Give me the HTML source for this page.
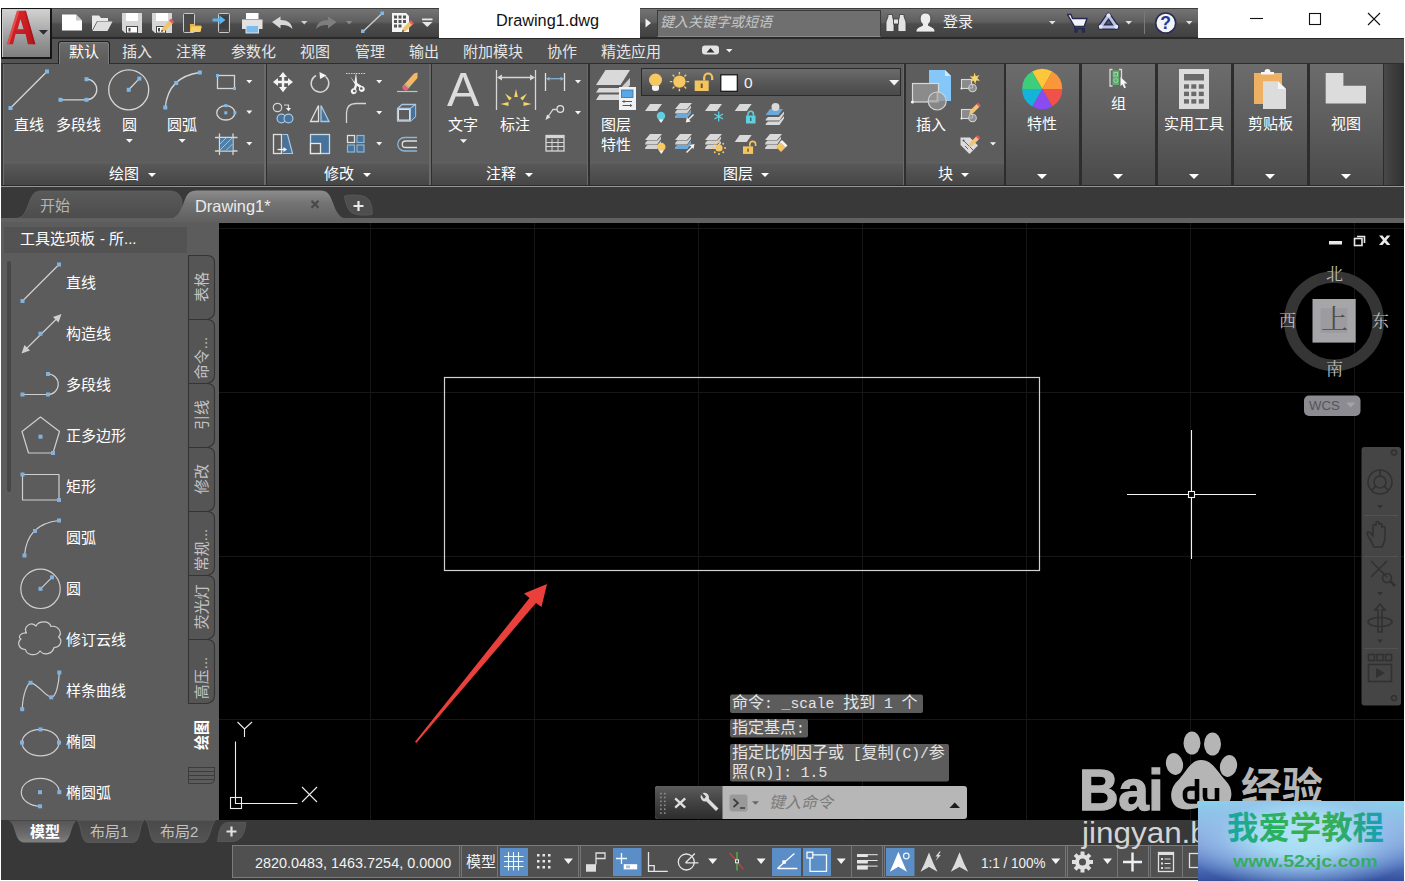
<!DOCTYPE html>
<html lang="zh-CN">
<head>
<meta charset="utf-8">
<title>Drawing1.dwg</title>
<style>
*{box-sizing:border-box;margin:0;padding:0}
html,body{width:1405px;height:881px;overflow:hidden;background:#fff}
body{position:relative;font-family:"Liberation Sans","Noto Sans CJK SC",sans-serif;font-size:15px;color:#fff;line-height:1}
.a{position:absolute}
.w{display:inline-block;position:relative;white-space:nowrap;line-height:1;font-family:"Liberation Sans","Noto Sans CJK SC",sans-serif}
svg{display:inline-block;overflow:visible}
.t{position:absolute;white-space:nowrap;line-height:0}
.tri{position:absolute;width:0;height:0;border-left:4px solid transparent;border-right:4px solid transparent;border-top:4px solid #fff}
.ic{position:absolute;overflow:visible}
</style>
</head>
<body>
<!-- ===== TITLE BAR ===== -->
<div class="a" id="titlebar" style="left:0;top:0;width:1405px;height:38px;background:#fff"></div>
<div class="a" id="qat" style="left:1px;top:8px;width:438px;height:30px;background:linear-gradient(#747474,#5e5e5e 46%,#4c4c4c 54%,#414141);border-top:1px solid #3e3e3e;border-bottom:1px solid #292929"></div>
<div class="a" id="infobar" style="left:640px;top:8px;width:558px;height:30px;background:linear-gradient(#747474,#5e5e5e 46%,#4c4c4c 54%,#414141);border-top:1px solid #3e3e3e;border-bottom:1px solid #292929"></div>
<div class="a" id="searchbox" style="left:657px;top:10px;width:224px;height:27px;background:#6f6f6f;border:1px solid #3a3a3a;border-bottom-color:#8a8a8a"></div>
<div class="t" style="left:660px;top:15px"><span class="w" style="font-size:14px;color:#c6c6c6;font-style:italic">键入关键字或短语</span></div>
<div class="t" id="wintitle" style="left:496px;top:11px;font-size:16.3px;line-height:19px;color:#111">Drawing1.dwg</div>
<div class="t" style="left:943px;top:14px"><span class="w" style="font-size:15px;color:#f0f0f0">登录</span></div>
<!-- window controls -->
<svg class="ic" style="left:1245px;top:8px" width="150" height="24" viewBox="0 0 150 24"><g stroke="#111" stroke-width="1.1" fill="none"><path d="M5 10.5h13"/><rect x="64.500" y="5.500" width="11" height="11"/><path d="M123 5l12 12M135 5l-12 12"/></g></svg>
<!-- app button -->
<div class="a" id="appbtn" style="z-index:3;left:1px;top:8px;width:51px;height:51px;background:linear-gradient(#d2d2d2,#b4b4b4 35%,#989898 65%,#7e7e7e);border:1px solid #161616;border-right-width:2px;border-bottom-width:2px;box-shadow:inset 1px 1px 0 #cdcdcd"></div>
<svg class="ic" id="titleicons" style="z-index:4;left:0;top:8px" width="1200" height="52" viewBox="0 8 1200 52">
<defs><linearGradient id="ag" x1="0" y1="0" x2="1" y2="1"><stop offset="0" stop-color="#e2272d"/><stop offset="1" stop-color="#b3161c"/></linearGradient></defs>
<!-- red A -->
<path fill-rule="evenodd" d="M6.800 44.200L17 10.800H25.900L35.400 44.200H27.900L25.600 34H15.600L13 44.200ZM17.600 29.200H23.600L20.500 19.200Z" fill="url(#ag)"/>
<path d="M17 10.800L19.500 10.800L9.300 44.200H6.800Z" fill="#f07a74" opacity=".5"/><path d="M24.500 10.800H25.900L35.400 44.200H33.500Z" fill="#8e1016" opacity=".45"/>
<path d="M38.800 30h9.200l-4.600 4.800Z" fill="#2a2e36"/>
<!-- new -->
<path d="M62 14.500H76L82 20.500V30.500H62Z" fill="#fff"/><path d="M76 14.500V20.500H82Z" fill="#c8c8c8"/>
<!-- open -->
<path d="M92 30.500V15.500H99L101 18H108V21H97L92 30.500Z" fill="#e9e9e9"/><path d="M97.500 21.500H112.500L107.500 31H92.500Z" fill="#dedede"/>
<!-- save -->
<path d="M122 13H142V33H125L122 30Z" fill="#d6d6d6"/><rect x="126" y="13" width="12" height="8" fill="#fff"/><rect x="126.500" y="26.500" width="11" height="6.500" fill="#fff" stroke="#4a4a4a" stroke-width="1"/><rect x="128.500" y="28" width="2" height="3.500" fill="#4a4a4a"/>
<!-- save as -->
<path d="M152 13H172V33H155L152 30Z" fill="#d6d6d6"/><rect x="156" y="13" width="12" height="8" fill="#fff"/><rect x="156.500" y="26.500" width="9" height="6.500" fill="#fff" stroke="#4a4a4a" stroke-width="1"/><rect x="158" y="28" width="2" height="3.500" fill="#4a4a4a"/>
<path d="M161 32l1.500-4.500l8-8l3 3l-8 8Z" fill="#f2c46a"/><path d="M169 20.500l2-2l3 3l-2 2Z" fill="#e9546b"/><path d="M161 32l.8-2.400l1.600 1.600Z" fill="#444"/>
<!-- open from mobile -->
<rect x="183.500" y="13.500" width="11" height="19" rx="1" fill="#4a4a4a" stroke="#c9c9c9" stroke-width="1"/><path d="M190 31.500V24h4l1.200 1.500H201V31.500Z" fill="#e8b23f"/><path d="M191.500 26.500H202L200 32H190Z" fill="#f6d06a"/>
<!-- save to mobile -->
<rect x="218.500" y="13.500" width="11" height="19" rx="1" fill="#4a4a4a" stroke="#c9c9c9" stroke-width="1"/><rect x="220" y="16" width="8" height="13" fill="#3f3f3f"/><path d="M212.500 18.500H219.500V15.500L225.500 20L219.500 24.500V21.500H212.500Z" fill="#58b4ee"/>
<!-- print -->
<rect x="246" y="13" width="12.500" height="6" fill="#fff"/><path d="M242 19.500H262.500V29H242Z" fill="#e2e2e2"/><rect x="246" y="25.500" width="12.500" height="7.500" fill="#7cbcec" stroke="#e2e2e2" stroke-width="1"/>
<!-- undo -->
<path d="M272 22l8.500-5.500v3.500c7 0 11 3 12 9c-3-3.500-7-4.500-12-4v3.500Z" fill="#d9d9d9"/>
<path d="M301 21h6.500l-3.250 3.500Z" fill="#d0d0d0"/>
<!-- redo -->
<path d="M336.500 22l-8.500-5.500v3.500c-7 0-11 3-12 9c3-3.500 7-4.500 12-4v3.500Z" fill="#7e7e7e"/>
<path d="M346 21h6.500l-3.250 3.500Z" fill="#8a8a8a"/>
<!-- line -->
<path d="M363 31.500L382 13.500" stroke="#cfcfcf" stroke-width="1.300"/><rect x="361" y="29.500" width="3.500" height="3.500" fill="#7fb8e6"/><rect x="380.500" y="11.500" width="3.500" height="3.500" fill="#7fb8e6"/>
<!-- batch -->
<path d="M392 13H406L409 16V32H392Z" fill="#f4f4f4"/><g fill="#555"><rect x="394" y="15.500" width="3" height="3"/><rect x="398.500" y="15.500" width="3" height="3"/><rect x="403" y="15.500" width="3" height="3"/><rect x="394" y="20" width="3" height="3"/><rect x="398.500" y="20" width="3" height="3"/><rect x="403" y="20" width="3" height="3"/><rect x="394" y="24.500" width="3" height="3"/><rect x="398.500" y="24.500" width="3" height="3"/></g>
<path d="M402 32l1.500-4.500l7-7l3 3l-7 7Z" fill="#f2c46a"/><path d="M409 22l1.800-1.800l3 3l-1.800 1.800Z" fill="#e9546b"/><path d="M402 32l.8-2.400l1.600 1.600Z" fill="#444"/>
<!-- qat dropdown -->
<rect x="422" y="18.500" width="10.500" height="1.800" fill="#e6e6e6"/><path d="M422 22h10.500l-5.250 5Z" fill="#e6e6e6"/>
<!-- search arrow -->
<path d="M645.500 18.500V27.500L651 23Z" fill="#f0f0f0"/>
<!-- binoculars -->
<g fill="#e3e3e3" stroke="#3a3a3a" stroke-width=".8"><path d="M886 31.500V22l2-5.500V14.500h4.500V16.500l1.500 5.500V31.500Z"/><path d="M898 31.500V22l1.500-5.500V14.500H904V16.500l2 5.500V31.500Z"/><rect x="893.500" y="19" width="5" height="5"/></g>
<!-- user -->
<path d="M916 32c0-4 3-5 6.500-6.500v-1.500c-1.500-1.200-2.300-3-2.300-5.500c0-3.500 2-5.500 5.300-5.500s5.300 2 5.300 5.500c0 2.500-.8 4.300-2.300 5.500v1.500c3.500 1.500 6.500 2.500 6.500 6.500Z" fill="#ececec" stroke="#3c3c3c" stroke-width=".8"/>
<path d="M1049 21h6.500l-3.250 3.500Z" fill="#e0e0e0"/>
<!-- cart -->
<path d="M1067.500 14.500h3.500l1.500 4H1087l-2.800 8H1074.500Z" fill="#f4f4f6" stroke="#262a50" stroke-width="1.400" stroke-linejoin="round"/><path d="M1074.500 26.500l.5 2.200H1085" fill="none" stroke="#262a50" stroke-width="1.400"/><circle cx="1076" cy="31" r="1.900" fill="#262a50"/><circle cx="1083.500" cy="31" r="1.900" fill="#262a50"/>
<!-- a360 -->
<path d="M1108.500 15.500L1116.500 27H1100.500Z" fill="none" stroke="#262a50" stroke-width="5.600" stroke-linejoin="round"/><path d="M1108.500 15.500L1116.500 27H1100.500Z" fill="none" stroke="#bcc3e2" stroke-width="3" stroke-linejoin="round"/>
<circle cx="1108.500" cy="15.300" r="2" fill="#e4e7f6"/><circle cx="1100.700" cy="26.800" r="2" fill="#e4e7f6"/><circle cx="1116.300" cy="26.800" r="2" fill="#e4e7f6"/>
<path d="M1125.500 21h6.500l-3.250 3.500Z" fill="#e0e0e0"/>
<path d="M1144.500 12V34" stroke="#7a7a7a" stroke-width="1"/>
<!-- help -->
<circle cx="1165.700" cy="23" r="10" fill="#f4f4f8" stroke="#2a2e52" stroke-width="1.600"/><text x="1165.700" y="29.300" text-anchor="middle" font-family="Liberation Sans, sans-serif" font-weight="bold" font-size="17.500" fill="#27359a">?</text>
<path d="M1186 21h6.500l-3.250 3.500Z" fill="#e0e0e0"/>
</svg>
<!-- ===== RIBBON ===== -->
<div class="a" id="tabrow" style="left:1px;top:38px;width:1403px;height:25px;background:#545454;border-top:1px solid #2a2a2a"></div>
<div class="a" id="ribbon" style="left:1px;top:63px;width:1403px;height:124px;background:#5d5d5d;border-top:1px solid #2e2e2e;border-bottom:1px solid #969696;box-shadow:inset 0 -1px 0 #2a2a2a"></div>
<div class="a" id="ribtitles" style="left:4px;top:161.500px;width:1000px;height:23.500px;background:linear-gradient(#636363,#585858 10%,#4f4f4f 55%,#464646)"></div>
<div class="a" id="tab-active" style="left:58px;top:41px;width:52px;height:23px;background:linear-gradient(#6b6b6b,#5f5f5f 70%,#5d5d5d);border:1px solid #202020;border-bottom:none;border-radius:3px 3px 0 0;box-shadow:inset 1px 1px 0 #7c7c7c,inset -1px 0 0 #7c7c7c"></div>
<div class="t" style="left:69px;top:43.500px"><span class="w" style="font-size:15px;color:#fff">默认</span></div>
<div class="t" style="left:122px;top:43.500px"><span class="w" style="font-size:15px;color:#e6e6e6">插入</span></div>
<div class="t" style="left:176px;top:43.500px"><span class="w" style="font-size:15px;color:#e6e6e6">注释</span></div>
<div class="t" style="left:231px;top:43.500px"><span class="w" style="font-size:15px;color:#e6e6e6">参数化</span></div>
<div class="t" style="left:300px;top:43.500px"><span class="w" style="font-size:15px;color:#e6e6e6">视图</span></div>
<div class="t" style="left:355px;top:43.500px"><span class="w" style="font-size:15px;color:#e6e6e6">管理</span></div>
<div class="t" style="left:409px;top:43.500px"><span class="w" style="font-size:15px;color:#e6e6e6">输出</span></div>
<div class="t" style="left:463px;top:43.500px"><span class="w" style="font-size:15px;color:#e6e6e6">附加模块</span></div>
<div class="t" style="left:547px;top:43.500px"><span class="w" style="font-size:15px;color:#e6e6e6">协作</span></div>
<div class="t" style="left:601px;top:43.500px"><span class="w" style="font-size:15px;color:#e6e6e6">精选应用</span></div>
<!-- panel separators -->
<div class="a" style="left:3px;top:64px;width:1px;height:121px;background:#6c6c6c"></div><div class="a" style="left:1px;top:64px;width:2px;height:121px;background:#383838"></div>
<div class="a" style="left:264px;top:64px;width:3px;height:121px;background:linear-gradient(90deg,#6a6a6a 50%,#2f2f2f 50%)"></div>
<div class="a" style="left:429px;top:64px;width:3px;height:121px;background:linear-gradient(90deg,#6a6a6a 50%,#2f2f2f 50%)"></div>
<div class="a" style="left:587px;top:64px;width:3px;height:121px;background:linear-gradient(90deg,#6a6a6a 50%,#2f2f2f 50%)"></div>
<div class="a" style="left:903px;top:64px;width:3px;height:121px;background:linear-gradient(90deg,#6a6a6a 50%,#2f2f2f 50%)"></div>
<!-- panel titles -->
<div class="t" style="left:109px;top:166px"><span class="w" style="font-size:15px;color:#fff">绘图</span></div><div class="tri t2" style="left:148.300px;top:173px"></div>
<div class="t" style="left:324px;top:166px"><span class="w" style="font-size:15px;color:#fff">修改</span></div><div class="tri t2" style="left:362.900px;top:173px"></div>
<div class="t" style="left:486px;top:166px"><span class="w" style="font-size:15px;color:#fff">注释</span></div><div class="tri t2" style="left:524.500px;top:173px"></div>
<div class="t" style="left:723px;top:166px"><span class="w" style="font-size:15px;color:#fff">图层</span></div><div class="tri t2" style="left:761.300px;top:173px"></div>
<div class="t" style="left:938px;top:166px"><span class="w" style="font-size:15px;color:#fff">块</span></div><div class="tri t2" style="left:960.700px;top:173px"></div>
<!-- big button labels -->
<div class="t" style="left:14px;top:117px"><span class="w" style="font-size:15px;color:#fff">直线</span></div>
<div class="t" style="left:56px;top:117px"><span class="w" style="font-size:15px;color:#fff">多段线</span></div>
<div class="t" style="left:122px;top:117px"><span class="w" style="font-size:15px;color:#fff">圆</span></div>
<div class="t" style="left:167px;top:117px"><span class="w" style="font-size:15px;color:#fff">圆弧</span></div>
<div class="t" style="left:448px;top:117px"><span class="w" style="font-size:15px;color:#fff">文字</span></div>
<div class="t" style="left:500px;top:117px"><span class="w" style="font-size:15px;color:#fff">标注</span></div>
<div class="t" style="left:601px;top:117px"><span class="w" style="font-size:15px;color:#fff">图层</span></div>
<div class="t" style="left:601px;top:137px"><span class="w" style="font-size:15px;color:#fff">特性</span></div>
<div class="t" style="left:916px;top:117px"><span class="w" style="font-size:15px;color:#fff">插入</span></div>
<!-- collapsed panels -->
<style>.cp{background:linear-gradient(#6c6c6c,#5d5d5d 50%,#4a4a4a)}.t2{border-left-width:4.800px;border-right-width:4.800px;border-top-width:4.800px}.t3{border-left-width:5px;border-right-width:5px;border-top-width:5.400px}</style>
<div class="a" style="left:1003.500px;top:64px;width:381px;height:121px;background:#2d2d2d"></div>
<div class="a cp" style="left:1005.5px;top:64px;width:73.500px;height:121px"></div>
<div class="a cp" style="left:1081.5px;top:64px;width:73.500px;height:121px"></div>
<div class="a cp" style="left:1157.5px;top:64px;width:73.500px;height:121px"></div>
<div class="a cp" style="left:1233.5px;top:64px;width:73.500px;height:121px"></div>
<div class="a cp" style="left:1309.5px;top:64px;width:73.500px;height:121px"></div>
<div class="a" style="left:1384px;top:64px;width:20px;height:121px;background:linear-gradient(90deg,#484848,#303030)"></div>
<div class="t" style="left:1027px;top:116px"><span class="w" style="font-size:15px;color:#fff">特性</span></div><div class="tri t3" style="left:1037px;top:173.800px"></div>
<div class="t" style="left:1111px;top:96px"><span class="w" style="font-size:15px;color:#fff">组</span></div><div class="tri t3" style="left:1113px;top:173.800px"></div>
<div class="t" style="left:1164px;top:116px"><span class="w" style="font-size:15px;color:#fff">实用工具</span></div><div class="tri t3" style="left:1189px;top:173.800px"></div>
<div class="t" style="left:1248px;top:116px"><span class="w" style="font-size:15px;color:#fff">剪贴板</span></div><div class="tri t3" style="left:1265px;top:173.800px"></div>
<div class="t" style="left:1331px;top:116px"><span class="w" style="font-size:15px;color:#fff">视图</span></div><div class="tri t3" style="left:1341px;top:173.800px"></div>
<!-- ===== ribbon icons: draw panel ===== -->
<svg class="ic" id="rib-icons" style="left:0;top:63px" width="1405" height="123" viewBox="0 63 1405 123">
<g fill="none" stroke="#d6d6d6" stroke-width="1.300" stroke-linecap="round">
<path d="M10.500 108L47 71.500"/>
<path d="M60.500 99.800H86.500A10.300 10.300 0 0 0 86.500 79.200"/>
<circle cx="128.700" cy="89.800" r="20"/><path d="M128.700 89.800L139.300 78.600"/>
<path d="M165.300 107.500Q168 77 199.800 72.500"/>
<rect x="217.500" y="75.500" width="17" height="13"/>
<ellipse cx="225.800" cy="112.800" rx="9.100" ry="7.200"/>
<path d="M219.500 134V154.500M233 134V154.500M215.500 137.500H237M215.500 151H237"/>
</g>
<rect x="220" y="138" width="12.500" height="12.500" fill="#4f7fa6"/>
<g stroke="#9cc3e0" stroke-width="1"><path d="M220 144l6-6M220 150l12-12M226 150.500l6.500-6.500"/></g>
<g fill="#7fb8e6">
<rect x="8.500" y="106" width="4" height="4"/><rect x="45" y="69.500" width="4" height="4"/>
<rect x="58.500" y="97.800" width="4" height="4"/><rect x="84.500" y="97.800" width="4" height="4"/><rect x="84.500" y="77.200" width="4" height="4"/>
<rect x="126.700" y="87.800" width="4" height="4"/><rect x="137.300" y="76.600" width="4" height="4"/>
<rect x="163.300" y="105.500" width="4" height="4"/><rect x="174.200" y="81" width="4" height="4"/><rect x="197.800" y="70.500" width="4" height="4"/>
<rect x="216" y="74" width="3" height="3"/><rect x="233" y="87" width="3" height="3"/>
<rect x="224.300" y="111.300" width="3" height="3"/><rect x="224.300" y="104.100" width="3" height="3"/><rect x="233.400" y="111.300" width="3" height="3"/>
</g>
<g fill="#f4f4f4">
<path d="M246.300 80h6l-3 3.400Z"/><path d="M246.300 110.500h6l-3 3.400Z"/><path d="M246.300 142h6l-3 3.400Z"/>
<path d="M125.900 139h7l-3.500 3.800Z"/><path d="M178.700 139h7l-3.500 3.800Z"/>
<path d="M376.200 80h6l-3 3.400Z"/><path d="M376.200 111h6l-3 3.400Z"/><path d="M376.200 142h6l-3 3.400Z"/>
<path d="M460 139.300h7l-3.500 3.800Z"/>
<path d="M575 80h6l-3 3.400Z"/><path d="M575 111h6l-3 3.400Z"/>
<path d="M990 142.200h6l-3 3.400Z"/>
</g>
<!-- ===== modify panel ===== -->
<!-- move -->
<path d="M283 72l4 5h-2.800v3.800h3.800V78l5 4l-5 4v-2.800h-3.800V87h2.800l-4 5.300l-4-5.300h2.800v-3.800h-3.800V86l-5-4l5-4v2.800h3.800V77h-2.800Z" fill="#f4f4f4"/>
<!-- rotate -->
<path d="M325.500 76.500A8.800 8.800 0 1 1 316 75.500" fill="none" stroke="#d6d6d6" stroke-width="1.500"/><path d="M319.500 72l7 3.500l-6.500 3.500Z" fill="#f4f4f4"/>
<!-- trim -->
<path d="M346 73.500H366" stroke="#cfcfcf" stroke-width="1.200" stroke-dasharray="1.500 1"/>
<path d="M356 72.500l1.200 10.500l4.500 3a3 3 0 1 1-2.500 1.500l-2.200-1.800l-1 3.500a3 3 0 1 1-2.300-1l1.300-3.700l-5-8.500l4.500 6Z" fill="#f4f4f4"/>
<circle cx="361.300" cy="88.500" r="1.300" fill="#5d5d5d"/><circle cx="354.300" cy="91" r="1.300" fill="#5d5d5d"/>
<!-- erase -->
<path d="M397 91.500H417.500" stroke="#9fd2cf" stroke-width="1.200"/><path d="M402.500 86.500L414 73.500L417.500 72.500V78L406.500 90.500Z" fill="#f2b866"/><path d="M402.500 86.500l2-2.200l4 4l-2 2.200c-1.500 1.200-5.500-2.500-4-4Z" fill="#ea5f77"/><path d="M404.500 84.300l1-1.100l4 4l-1 1.100Z" fill="#8cc99a"/>
<!-- copy -->
<circle cx="277.500" cy="107.500" r="4.200" fill="none" stroke="#d6d6d6" stroke-width="1.200"/><path d="M284 105h4.500v3.500" fill="none" stroke="#d6d6d6" stroke-width="1.200"/><path d="M286 108h5l-2.500 3.200Z" fill="#f4f4f4"/>
<circle cx="281.500" cy="118.500" r="4.400" fill="#47729a" stroke="#a9c9e2" stroke-width="1.200"/><circle cx="288.500" cy="118.500" r="4.400" fill="#47729a" stroke="#a9c9e2" stroke-width="1.200"/>
<!-- mirror -->
<path d="M318.500 105.500V121.500H310.500Z" fill="none" stroke="#e0e0e0" stroke-width="1.300"/><path d="M321 105.500V121.500H329Z" fill="#47729a" stroke="#a9c9e2" stroke-width="1.300"/>
<!-- fillet -->
<path d="M346.500 123V113Q346.500 103.500 356 103.500H366" fill="none" stroke="#d6d6d6" stroke-width="1.300"/>
<!-- 3d box -->
<path d="M397.500 108.500H410.500V121H397.500ZM397.500 108.500L402 104.500H415.500L410.500 108.500M415.500 104.500V116.500L410.500 121" fill="none" stroke="#a9c9e2" stroke-width="1.300" stroke-linejoin="round"/><path d="M411 108.700L415.200 105.200V116.300L411 120.500Z" fill="#47729a"/><path d="M398.500 109.500H409.500V120H398.500Z" fill="none" stroke="#e0e0e0" stroke-width="1"/>
<!-- stretch -->
<path d="M282.500 134.500H287.500L292.500 153.500H282.500" fill="#47729a" stroke="#a9c9e2" stroke-width="1.200"/><rect x="273.500" y="134.500" width="8" height="19" fill="none" stroke="#e0e0e0" stroke-width="1.300"/><path d="M277.500 149.500H284" stroke="#f4f4f4" stroke-width="1.300"/><path d="M283.500 147l3.500 2.500l-3.500 2.500Z" fill="#f4f4f4"/>
<!-- scale -->
<rect x="310.500" y="134.500" width="19" height="19" fill="#47729a" stroke="#c5d9ea" stroke-width="1.300"/><rect x="310.500" y="143.500" width="10" height="10" fill="#5d5d5d" stroke="#e8e8e8" stroke-width="1.300"/>
<!-- array -->
<rect x="347.500" y="135.500" width="7" height="7" fill="none" stroke="#e0e0e0" stroke-width="1.300"/><g fill="#47729a" stroke="#8db6d6" stroke-width="1.200"><rect x="357" y="135.500" width="7" height="7"/><rect x="347.500" y="145" width="7" height="7"/><rect x="357" y="145" width="7" height="7"/></g>
<!-- offset -->
<path d="M417 137.500H404.500A6.500 6.500 0 0 0 404.500 151H417" fill="none" stroke="#8db6d6" stroke-width="1.300"/><path d="M417 141H405.500A3.200 3.200 0 0 0 405.500 147.500H417" fill="none" stroke="#e0e0e0" stroke-width="1.300"/>
<!-- ===== annotation panel ===== -->
<g stroke="#d6d6d6" stroke-width="1.300" fill="none"><path d="M496.500 70V110M535.500 70V110M499 77.500H533"/></g>
<path d="M497 77.500l5-3v6ZM535 77.500l-5-3v6Z" fill="#d6d6d6"/>
<g fill="#f3d66a"><path d="M516 89l1.800 8h-3.600Z"/><path d="M505 93.500l6.800 4.500l-2.500 2.500Z"/><path d="M527 93.500l-6.800 4.500l2.500 2.500Z"/><path d="M500.500 104l8-2v4Z"/><path d="M531.500 104l-8-2v4Z"/></g>
<g stroke="#e0e0e0" stroke-width="1.300" fill="none"><path d="M545.500 73V91M564.500 73V91"/></g><path d="M547 78.700H563" stroke="#8db6d6" stroke-width="1.200"/><path d="M546 78.700l3.500-2v4ZM564 78.700l-3.500-2v4Z" fill="#8db6d6"/>
<circle cx="560.300" cy="109" r="3.300" fill="none" stroke="#e0e0e0" stroke-width="1.300"/><path d="M557 109.500H553L547.500 117.500" fill="none" stroke="#d6d6d6" stroke-width="1.300"/><path d="M545.500 120l1.500-5.500l3.500 2.800Z" fill="#e0e0e0"/>
<g stroke="#d6d6d6" fill="none"><rect x="546" y="135.500" width="18" height="15.500" stroke-width="1.300"/><path d="M546 137H564" stroke-width="2.200"/><path d="M546 142.500H564M546 146.500H564M552 139V151M558 139V151" stroke-width="1"/></g>
<!-- ===== layer panel ===== -->
<g fill="#d9d9d9"><path d="M605.500 70H630L620.500 85H596Z"/><path d="M596 92.500L599 88H622L619 92.500Z" /><path d="M596 100L599.500 94.500H620L619 100Z"/><path d="M622 86.500L630 78V85L625 92Z" opacity=".9"/></g>
<rect x="619" y="87" width="17" height="23" fill="#f2f2f2"/><rect x="621.500" y="90" width="11.500" height="7.500" fill="#58a7e6" stroke="#3b6e9e" stroke-width=".8"/><path d="M622.500 101.500H632M622.500 105.500H632" stroke="#555" stroke-width="1"/><path d="M622 101.500l2.500-1.500v3ZM632.500 105.500l-2.500-1.500v3Z" fill="#555"/>
</svg>
<!-- layer dropdown -->
<div class="a" id="layerdd" style="left:641px;top:68px;width:260px;height:28px;background:linear-gradient(#6b6b6b,#555 60%,#4a4a4a);border:1px solid #2b2b2b"></div>
<div class="t" style="left:744px;top:74px;font-size:15.500px;line-height:17px;color:#f4f4f4">0</div>
<svg class="ic" id="layer-icons" style="left:640px;top:63px" width="370" height="123" viewBox="640 63 370 123">
<defs>
<g id="para"><path d="M5 0H17L12 7H0Z"/></g>
<g id="stack3"><path d="M5 0H17L12 6H0Z"/><path d="M.5 8.500L2.500 6.500H12.500L16 2.500V5L12 10.500H0Z" opacity=".95"/><path d="M.5 13L2.500 11H12.500L16 7V9.500L12 15H0Z" opacity=".95"/></g>
<g id="lockopen"><rect x="0" y="7.500" width="14" height="10.500" fill="#f3c45f"/><path d="M9.500 7.500V4.500a4 4 0 0 1 8 0V7" fill="none" stroke="#f3c45f" stroke-width="2.200"/><rect x="6" y="10.500" width="2" height="4.500" fill="#6b5a2a"/></g>
</defs>
<!-- bulb -->
<circle cx="655.500" cy="80" r="6.500" fill="#f6c863"/><path d="M652 86h7v2.500a3.500 2.500 0 0 1-7 0Z" fill="#f4f4f4"/>
<!-- sun -->
<circle cx="679.400" cy="81.600" r="6.200" fill="#f6c863"/><g stroke="#f6c863" stroke-width="1.400"><path d="M679.400 72v2.500M679.400 88.700v2.500M669.800 81.600h2.500M686.500 81.600h2.500M672.600 74.800l1.800 1.800M684.400 86.600l1.800 1.800M672.600 88.400l1.800-1.800M684.400 76.600l1.800-1.800"/></g>
<!-- lock open -->
<use href="#lockopen" x="694.700" y="73"/>
<!-- swatch -->
<rect x="720.800" y="74.800" width="16.500" height="16.500" fill="#fff" stroke="#111" stroke-width="1.200"/>
<path d="M889.200 80h10l-5 5.500Z" fill="#f4f4f4"/>
<!-- row 2 -->
<g fill="#d9d9d9"><use href="#para" x="645" y="104"/><use href="#para" x="705" y="104"/><use href="#para" x="734.700" y="104"/></g>
<circle cx="661" cy="116" r="4.200" fill="#5fd0e0"/><path d="M658.500 119.500h5l-2.500 3.500Z" fill="#f4f4f4"/>
<g fill="#d9d9d9"><use href="#stack3" x="675" y="103"/></g><path d="M675.500 116L677.500 114H687.500L691 110V112.500L687 118H675Z" fill="#6aa9da"/><path d="M693.500 114.500l-5.500 5.500" stroke="#f4f4f4" stroke-width="1.500"/><path d="M685.800 122.500l1-5l4 4Z" fill="#f4f4f4"/>
<g stroke="#5fd0e0" stroke-width="1.300"><path d="M718.700 111.500v10M714.400 114l8.600 5M714.400 119l8.600-5"/></g>
<rect x="746" y="115.500" width="9.500" height="8" fill="#5fd0e0"/><path d="M748 115.500v-1.500a2.700 2.700 0 0 1 5.400 0v1.500" fill="none" stroke="#5fd0e0" stroke-width="1.600"/><rect x="750" y="117.500" width="1.500" height="3.500" fill="#2f6f78"/>
<g fill="#6aa9da"><path d="M770 109H783L778.500 115H765.500Z"/></g><g fill="#d9d9d9"><path d="M766 119L768 117H779L784 111.500V114L779.500 120.500H765.500Z"/><path d="M766 123.500L768 121.500H779L784 116V118.500L779.500 125H765.500Z"/><circle cx="775.500" cy="107" r="4"/></g>
<!-- row 3 -->
<g fill="#d9d9d9"><use href="#stack3" x="645" y="134"/><use href="#stack3" x="675" y="134"/><use href="#stack3" x="705" y="134"/><use href="#para" x="734.700" y="135"/><use href="#stack3" x="765" y="134"/></g>
<circle cx="661.300" cy="147" r="4.200" fill="#f6c863"/><path d="M658.800 150.500h5l-2.500 3.500Z" fill="#f4f4f4"/>
<path d="M675.500 147L677.500 145H687.500L691 141V143.500L687 149H675Z" fill="#6aa9da"/><path d="M686.500 152.500l6-6" stroke="#f4f4f4" stroke-width="1.500"/><path d="M694.500 144l-1 5l-4-4Z" fill="#f4f4f4"/>
<circle cx="719" cy="148" r="3.600" fill="#f6c863"/><g fill="#f6c863"><circle cx="719" cy="142" r="1"/><circle cx="719" cy="154" r="1"/><circle cx="713" cy="148" r="1"/><circle cx="725" cy="148" r="1"/><circle cx="714.800" cy="143.800" r="1"/><circle cx="723.200" cy="143.800" r="1"/><circle cx="714.800" cy="152.200" r="1"/><circle cx="723.200" cy="152.200" r="1"/></g>
<g transform="translate(743 141) scale(.72)"><use href="#lockopen"/></g>
<path d="M776 147l4.500-4.500l5 5l-4.500 4.500Z" fill="#f3c45f"/><path d="M780 142l2-2l5.500 5.500l-2 2Z" fill="#f4f4f4"/>
<!-- ===== block panel ===== -->
<path d="M929 70H945L951 76V101H929Z" fill="#86c7fa"/><path d="M945 70V76H951Z" fill="#cfe8fb"/>
<rect x="912.500" y="83.500" width="26" height="18.500" fill="#8b8b8b" stroke="#d9d9d9" stroke-width="1.200"/>
<circle cx="937.200" cy="101" r="9" fill="#949494" fill-opacity=".75" stroke="#d2d2d2" stroke-width="1.200"/><path d="M937.200 92V101H928.200" fill="none" stroke="#c6c6c6" stroke-width="1"/>
<circle cx="912.500" cy="102" r="1.600" fill="#f4f4f4"/>
<g id="blk"><rect x="961.500" y="79.500" width="10" height="9" fill="#8b8b8b" stroke="#d9d9d9" stroke-width="1.100"/><circle cx="972.500" cy="88" r="3.800" fill="#8f8f8f" stroke="#d2d2d2" stroke-width="1.100"/><path d="M972.500 84.200V88H968.700" fill="none" stroke="#c6c6c6" stroke-width=".9"/><circle cx="961.500" cy="88.500" r="1" fill="#f4f4f4"/></g>
<path d="M974.500 72.500l1.300 3.700l3.700-1.300l-2.200 3.100l2.700 2.700l-3.800-.3l-.9 3.800l-1.500-3.500l-3.600 1.300l2.300-3.100l-2.800-2.700l3.800.3Z" fill="#f6d76b"/>
<use href="#blk" y="30"/>
<path d="M969 114.500l1.200-4l6.500-6.500l2.800 2.800l-6.500 6.500Z" fill="#f2c47a"/><path d="M976.500 104.200l1.600-1.600l2.800 2.800l-1.600 1.600Z" fill="#e9546b"/>
<path d="M960.500 137.500H970L978 145.500L969.500 154L960.500 145Z" fill="#dcdcdc"/><path d="M963.500 140.500l9.500 9.500M965 146l3 3" stroke="#666" stroke-width="1"/><circle cx="963.500" cy="140.500" r="1" fill="#555"/>
<path d="M968.500 147l1.200-4l6.500-6.500l2.800 2.800l-6.500 6.500Z" fill="#f2c47a"/><path d="M976 136.700l1.600-1.600l2.800 2.800l-1.600 1.600Z" fill="#e9546b"/>
</svg>
<!-- collapsed-panel icons -->
<svg class="ic" id="cp-icons" style="left:1005px;top:63px" width="400" height="123" viewBox="1005 63 400 123">
<g transform="translate(1042.200 89)">
<path d="M0 0L-10.050 -17.410A20.100 20.100 0 0 1 10.050 -17.410Z" fill="#fdc63b"/>
<path d="M0 0L10.050 -17.410A20.100 20.100 0 0 1 20.100 0Z" fill="#fb9639"/>
<path d="M0 0L20.100 0A20.100 20.100 0 0 1 10.050 17.410Z" fill="#f0524b"/>
<path d="M0 0L10.050 17.410A20.100 20.100 0 0 1 -10.050 17.410Z" fill="#8a4bf0"/>
<path d="M0 0L-10.050 17.410A20.100 20.100 0 0 1 -20.100 0Z" fill="#16b3d9"/>
<path d="M0 0L-20.100 0A20.100 20.100 0 0 1 -10.050 -17.410Z" fill="#3dcd7b"/>
</g>
<!-- group -->
<rect x="1112.500" y="70.500" width="6.500" height="14.500" fill="#5fae6e"/><rect x="1114" y="72.500" width="3.500" height="3.500" fill="none" stroke="#9fd6a8" stroke-width=".9"/><circle cx="1115.800" cy="80.500" r="2" fill="none" stroke="#9fd6a8" stroke-width=".9"/>
<path d="M1112.500 69.500H1110V86H1112.500M1119 69.500H1121.500V78" fill="none" stroke="#d9d9d9" stroke-width="1.300"/>
<path d="M1120.500 77l6.800 6.500h-3.200l1.800 4l-1.600.8l-1.900-4l-1.900 2Z" fill="#f8f8f8"/>
<!-- calculator -->
<rect x="1179" y="69" width="30" height="40" fill="#dcdcdc"/><g fill="#6a6a6a"><rect x="1184" y="74" width="20" height="6.500"/>
<rect x="1184" y="84.300" width="5" height="4.400"/><rect x="1191.300" y="84.300" width="5" height="4.400"/><rect x="1198.800" y="84.300" width="5" height="4.400"/>
<rect x="1184" y="91.700" width="5" height="4.400"/><rect x="1191.300" y="91.700" width="5" height="4.400"/><rect x="1198.800" y="91.700" width="5" height="4.400"/>
<rect x="1184" y="99.200" width="5" height="4.400"/><rect x="1191.300" y="99.200" width="5" height="4.400"/><rect x="1198.800" y="99.200" width="5" height="4.400"/></g>
<!-- clipboard -->
<rect x="1254" y="73" width="28" height="31" fill="#eeb063"/><path d="M1261 74.500h13v-2.500h-3.500a3 3 0 0 0-6 0h-3.500Z" fill="#f6f6f6"/>
<path d="M1263 81.300H1278L1286 89V109H1263Z" fill="#dcdcdc"/><path d="M1278 81.300V89H1286Z" fill="#f6f6f6"/>
<!-- view -->
<path d="M1325.700 73H1343.400V85.800H1366V103.500H1325.700Z" fill="#dcdcdc"/>
</svg>
<div class="t" id="bigA" style="left:447px;top:63px;font-size:48.5px;line-height:52px;color:#dcdcdc">A</div>
<svg class="ic" style="left:695px;top:40px" width="50" height="22" viewBox="695 40 50 22"><rect x="702" y="45.500" width="17" height="9" rx="3" fill="#e4e4e4"/><path d="M706.500 52.500h8l-4-4.500Z" fill="#333"/><path d="M726 49h6.500l-3.250 3.600Z" fill="#f0f0f0"/></svg>
<!-- ===== FILE TABS ===== -->
<div class="a" id="filetabs" style="left:1px;top:187px;width:1403px;height:32px;background:#393939"></div>
<div class="a" id="belowtabs" style="left:1px;top:218px;width:1403px;height:5px;background:#616161"></div>
<svg class="ic" style="left:0;top:186px" width="400" height="34" viewBox="0 186 400 34">
<defs><linearGradient id="tg1" x1="0" y1="0" x2="0" y2="1"><stop offset="0" stop-color="#5a5a5a"/><stop offset="1" stop-color="#4c4c4c"/></linearGradient>
<linearGradient id="tg2" x1="0" y1="0" x2="0" y2="1"><stop offset="0" stop-color="#8c8c8c"/><stop offset=".45" stop-color="#737373"/><stop offset="1" stop-color="#626262"/></linearGradient></defs>
<path d="M15 218.500C24 218.500 26 211 29 203C32 195 34 191 41 191H170C178 191 182 196 182 204C182 212 178 218.500 172 218.500Z" fill="url(#tg1)" stroke="#606060" stroke-width=".8"/>
<path d="M166 219.500C178 219.500 181 210 184 202C187 194 189 190.500 197 190.500H320C328 190.500 330 195 333 203C336 211 339 219.500 350 219.500Z" fill="url(#tg2)"/>
<path d="M344.500 196C354 194 366 195 369 200C372 205 372.500 210 372 214.500C362 216 352 215 349 210C346 205 345 200 344.500 196Z" fill="#4e4e4e" stroke="#5c5c5c" stroke-width=".8"/>
<path d="M353.500 206h10M358.500 201v10" stroke="#e8e8e8" stroke-width="2.200"/>
<path d="M311.500 200.700l7 7M318.500 200.700l-7 7" stroke="#484848" stroke-width="2.200"/>
</svg>
<div class="t" style="left:40px;top:198px"><span class="w" style="font-size:15px;color:#b4b4b4">开始</span></div>
<div class="t" id="dtab" style="left:195px;top:196.600px;font-size:16.500px;line-height:19px;color:#ececec;transform-origin:0 0;transform:scaleX(.993)">Drawing1*</div>
<!-- ===== TOOL PALETTE ===== -->
<div class="a" id="palette" style="left:1px;top:222px;width:218px;height:599px;background:#5c5c5c"></div>
<div class="a" id="pal-title" style="left:4px;top:227px;width:183px;height:26px;background:#535353"></div>
<div class="t" style="left:20px;top:231px"><span class="w" style="font-size:15px;color:#fff">工具选项板</span><span style="display:inline-block;width:5px"></span><span class="w" style="font-size:15px;color:#fff">-</span><span style="display:inline-block;width:4px"></span><span class="w" style="font-size:15px;color:#fff">所...</span></div>
<div class="a" style="left:7px;top:261px;width:4px;height:231px;background:#474747;border-radius:2px"></div>
<!-- vertical tabs -->
<svg class="ic" style="left:186px;top:250px" width="34" height="545" viewBox="186 250 34 545">
<g fill="#555" stroke="#343434" stroke-width="1.1">
<path d="M188.500 255.500H207Q214.500 255.500 214.500 263V311Q214.500 318.500 207 319.500H188.500Z"/>
<path d="M188.500 319.500H207Q214.500 319.500 214.500 327V375Q214.500 382.500 207 383.500H188.500Z"/>
<path d="M188.500 383.500H207Q214.500 383.500 214.500 391V439Q214.500 446.500 207 447.500H188.500Z"/>
<path d="M188.500 447.500H207Q214.500 447.500 214.500 455V503Q214.500 510.500 207 511.500H188.500Z"/>
<path d="M188.500 511.500H207Q214.500 511.500 214.500 519V567Q214.500 574.500 207 575.500H188.500Z"/>
<path d="M188.500 575.500H207Q214.500 575.500 214.500 583V631Q214.500 638.500 207 639.500H188.500Z"/>
<path d="M188.500 639.500H207Q214.500 639.500 214.500 647V695Q214.500 702.500 207 703.500H188.500Z"/>
</g>
<g fill="none" stroke="#3c3c3c" stroke-width="1">
<path d="M188.500 767.500H214.500M188.500 771.500H214.500M188.500 775.500H214.500M188.500 779.500H214.500M188.500 767V783.500H211Q214.500 783 214.500 779V767"/>
</g>
</svg>
<div class="t vt" style="left:201px;top:287px"><span class="w" style="font-size:15px;color:#c4c4c4">表格</span></div>
<div class="t vt" style="left:201px;top:357.500px"><span class="w" style="font-size:15px;color:#c4c4c4">命令...</span></div>
<div class="t vt" style="left:201px;top:415px"><span class="w" style="font-size:15px;color:#c4c4c4">引线</span></div>
<div class="t vt" style="left:201px;top:479px"><span class="w" style="font-size:15px;color:#c4c4c4">修改</span></div>
<div class="t vt" style="left:201px;top:549.500px"><span class="w" style="font-size:15px;color:#c4c4c4">常规...</span></div>
<div class="t vt" style="left:201px;top:607px"><span class="w" style="font-size:15px;color:#c4c4c4">荧光灯</span></div>
<div class="t vt" style="left:201px;top:677.500px"><span class="w" style="font-size:15px;color:#c4c4c4">高压...</span></div>
<div class="t vt" style="left:201px;top:735px"><span class="w" style="font-size:15px;color:#fff;font-weight:bold">绘图</span></div>
<style>.vt{transform:translate(-50%,-50%) rotate(-90deg);transform-origin:center}</style>
<!-- palette items -->
<div class="t" style="left:66px;top:275px"><span class="w" style="font-size:15px;color:#fff">直线</span></div>
<div class="t" style="left:66px;top:326px"><span class="w" style="font-size:15px;color:#fff">构造线</span></div>
<div class="t" style="left:66px;top:377px"><span class="w" style="font-size:15px;color:#fff">多段线</span></div>
<div class="t" style="left:66px;top:428px"><span class="w" style="font-size:15px;color:#fff">正多边形</span></div>
<div class="t" style="left:66px;top:479px"><span class="w" style="font-size:15px;color:#fff">矩形</span></div>
<div class="t" style="left:66px;top:530px"><span class="w" style="font-size:15px;color:#fff">圆弧</span></div>
<div class="t" style="left:66px;top:581px"><span class="w" style="font-size:15px;color:#fff">圆</span></div>
<div class="t" style="left:66px;top:632px"><span class="w" style="font-size:15px;color:#fff">修订云线</span></div>
<div class="t" style="left:66px;top:683px"><span class="w" style="font-size:15px;color:#fff">样条曲线</span></div>
<div class="t" style="left:66px;top:734px"><span class="w" style="font-size:15px;color:#fff">椭圆</span></div>
<div class="t" style="left:66px;top:785px"><span class="w" style="font-size:15px;color:#fff">椭圆弧</span></div>
<svg class="ic" style="left:0;top:255px" width="70" height="565" viewBox="0 255 70 565">
<g fill="none" stroke="#cfcfcf" stroke-width="1.2" stroke-linecap="round" stroke-linejoin="round">
<path d="M22.500 301L59 264.500"/>
<path d="M25 350L58 317.500"/>
<path d="M22.500 394.500H48A10.250 10.250 0 0 0 48 374"/>
<path d="M40.500 417L59.500 431.500L53 453H28.500L22 431.500Z"/>
<rect x="22.500" y="474.500" width="36.500" height="25.500"/>
<path d="M24.500 555.500Q27 524 59 520.500"/>
<circle cx="40.500" cy="588.800" r="19.700"/>
<path d="M40.500 588.800L52 577.300"/>
<path d="M26.500 633c-3.500-6 4-12 9.500-7c3-5.500 13-5.500 15 .5c7-1.500 12 6 7.500 10.500c4.500 3.500 2 10.500-4.500 10.500c-1.500 7-10.500 8-14 3.500c-3.500 5.500-13.500 4.500-14.500-1.500c-6.500 0-9-7-4.500-10.500c-3.500-1.500-1-6.500 5.500-6Z"/>
<path d="M22.200 709.200C23 692 28 683 30.500 682.800C37 683 46 697 51.200 697.300C56 697 59 684 59.300 672.500"/>
<ellipse cx="40.500" cy="742.600" rx="18.500" ry="13.200"/>
<path d="M59.300 792.200A19 14 0 1 0 40 806.300"/>
</g>
<g fill="#cfcfcf"><path d="M61.500 314l-3 8.500l-5.500-5.500Z"/><path d="M21.500 353.500l3-8.500l5.500 5.500Z"/></g>
<g fill="#7fb2dc">
<rect x="20.500" y="299" width="4" height="4"/><rect x="57" y="262.500" width="4" height="4"/>
<rect x="38.500" y="331.700" width="4" height="4"/>
<rect x="20.500" y="392.500" width="4" height="4"/><rect x="46" y="392.500" width="4" height="4"/><rect x="46" y="372" width="4" height="4"/>
<rect x="38.500" y="434.700" width="4" height="4"/><rect x="51" y="451" width="4" height="4"/>
<rect x="20.500" y="472.500" width="4" height="4"/><rect x="57" y="498" width="4" height="4"/>
<rect x="22.500" y="553.500" width="4" height="4"/><rect x="33" y="529" width="4" height="4"/><rect x="57" y="518.500" width="4" height="4"/>
<rect x="38.500" y="586.800" width="4" height="4"/><rect x="50" y="575.300" width="4" height="4"/>
<rect x="20.200" y="707.200" width="4" height="4"/><rect x="28.500" y="680.800" width="4" height="4"/><rect x="49.200" y="695.300" width="4" height="4"/><rect x="57.300" y="670.500" width="4" height="4"/>
<rect x="20" y="740.600" width="4" height="4"/><rect x="38.500" y="727.400" width="4" height="4"/><rect x="57" y="740.600" width="4" height="4"/>
<rect x="57.300" y="790.200" width="4" height="4"/><rect x="38" y="790.200" width="4" height="4"/><rect x="38" y="804.300" width="4" height="4"/>
</g>
</svg>
<!-- ===== DRAWING CANVAS ===== -->
<div class="a" id="canvas" style="left:219px;top:223px;width:1185px;height:597px;background:#000"></div>
<svg class="ic" id="drawing" style="left:219px;top:223px" width="1185" height="597" viewBox="219 223 1185 597">
<g stroke="#161616" stroke-width="1" fill="none">
<path d="M370.500 223V820M534.500 223V820M698.500 223V820M862.500 223V820M1026.500 223V820M1190.500 223V820M1354.500 223V820"/>
<path d="M219 228.500H1404M219 392.500H1404M219 556.500H1404M219 719.500H1404"/>
</g>
<rect x="444.500" y="377.500" width="595" height="193" fill="none" stroke="#d2d2d2" stroke-width="1.2"/>
<!-- crosshair -->
<g stroke="#f4f4f4" stroke-width="1.1" fill="none"><path d="M1191.500 430V559M1127 494.500H1256"/><rect x="1188.500" y="491.500" width="6" height="6" fill="#000"/></g>
<!-- UCS icon -->
<g stroke="#ededed" stroke-width="1.1" fill="none"><path d="M235.500 741.500V803.500H297.500"/><rect x="230.500" y="797.500" width="11" height="11"/><path d="M237.500 722L244.500 729L252 722M244.500 729V737"/><path d="M302 787L317 802M317 787L302 802"/></g>
<!-- red arrow -->
<path d="M415 741.800L529.500 598L524 593.500L547 584L541.500 607L536 603L416.300 743Z" fill="#ea403b"/>
<!-- viewport controls -->
<g fill="#e8e8e8"><rect x="1329" y="241" width="13" height="3.500"/><path d="M1379 235.500h3.500l2.200 2.700l2.200-2.700h3.500l-4 4.800l4 4.800h-3.500l-2.200-2.700l-2.200 2.700h-3.500l4-4.800Z"/></g>
<g fill="none" stroke="#e8e8e8" stroke-width="1.600"><rect x="1354.500" y="238.500" width="7.500" height="7"/><path d="M1357 236.500H1364.500V243"/></g>
<!-- compass -->
<circle cx="1334" cy="321.200" r="44.200" fill="none" stroke="#353535" stroke-width="11.600"/>
<rect x="1312.500" y="299" width="43.200" height="43.600" fill="#a6a6a9"/>
<rect x="1320.600" y="308.300" width="26.600" height="24.500" fill="#9b9ba0"/>
<!-- WCS -->
<rect x="1304" y="395.500" width="56.500" height="20.500" rx="5" fill="#8b8b91"/>
<path d="M1346 402.500h9.500l-4.750 5Z" fill="#a3a3a8"/>
<!-- nav bar -->
<rect x="1361.500" y="447" width="39.500" height="258.500" rx="3" fill="#454545"/>
<g stroke="#525252" stroke-width="1"><path d="M1364 515.500H1398M1364 556.500H1398M1364 648.500H1398"/></g>
<g fill="none" stroke="#313131" stroke-width="1.600">
<circle cx="1380" cy="482" r="12"/><circle cx="1380" cy="482" r="6"/><path d="M1371.500 490.500l4-4M1388.500 490.500l-4-4M1380 470v6"/>
<circle cx="1394" cy="452.500" r="2.500"/><circle cx="1394" cy="698" r="2.500"/>
<path d="M1371 561l16 16M1387 561l-16 16"/><circle cx="1387" cy="578" r="4.500"/><path d="M1390.500 581.500l4.500 4.500" stroke-width="2.500"/>
<path d="M1378 632V610h-3l5-6l5 6h-3v22Z"/><ellipse cx="1380" cy="622" rx="12" ry="4.500"/>
<rect x="1368.500" y="654.500" width="6" height="6"/><rect x="1377" y="654.500" width="6" height="6"/><rect x="1385.500" y="654.500" width="6" height="6"/>
<rect x="1368.500" y="664.500" width="23" height="17"/>
<path d="M1371 541c-3-5-5-8-3-9c2-1 3 2 5 4v-10c0-2 3-2 3 0v-3c0-2 3-2 3 0v2c0-2 3-2 3 0v3c0-2 3-2 3 0v9c0 5-2 8-3 10h-8c-1-2-2-4-3-6Z"/>
</g>
<g fill="#313131"><path d="M1377 505h6l-3 3.500Z"/><path d="M1377 592h6l-3 3.500Z"/><path d="M1377 639.500h6l-3 3.500Z"/><path d="M1376 668v10l9-5Z"/></g>
<!-- command history -->
<g fill="#5c5c5c"><rect x="730" y="694.500" width="193" height="18.500" rx="2"/><rect x="730" y="719" width="78" height="18.500" rx="2"/><rect x="730" y="744" width="219" height="37.500" rx="2"/></g>
<!-- command bar -->
<rect x="655" y="786" width="312" height="33" rx="3" fill="#b7b7b7"/>
<defs><linearGradient id="cbg" x1="0" y1="0" x2="0" y2="1"><stop offset="0" stop-color="#5c5c5c"/><stop offset=".5" stop-color="#424242"/><stop offset="1" stop-color="#2d2d2d"/></linearGradient></defs><path d="M658 786H722.500V819H658Q655 819 655 816V789Q655 786 658 786Z" fill="url(#cbg)"/>
<g fill="#8c8c8c"><rect x="660.100" y="792.800" width="1.600" height="1.600"/><rect x="660.100" y="796.700" width="1.600" height="1.600"/><rect x="660.100" y="800.600" width="1.600" height="1.600"/><rect x="660.100" y="804.500" width="1.600" height="1.600"/><rect x="660.100" y="808.400" width="1.600" height="1.600"/><rect x="660.100" y="812.300" width="1.600" height="1.600"/><rect x="664.000" y="792.800" width="1.600" height="1.600"/><rect x="664.000" y="796.700" width="1.600" height="1.600"/><rect x="664.000" y="800.600" width="1.600" height="1.600"/><rect x="664.000" y="804.500" width="1.600" height="1.600"/><rect x="664.000" y="808.400" width="1.600" height="1.600"/><rect x="664.000" y="812.300" width="1.600" height="1.600"/></g>
<path d="M675.200 798.300l10 9.300M685.200 798.300l-10 9.300" stroke="#dedede" stroke-width="2.400"/>
<path d="M701 794.500a5 5 0 0 0 5.500 7l9.500 9.500l2.500-2.500l-9.500-9.500a5 5 0 0 0-6.500-6l3.500 3.500l-2 2.500Z" fill="#dcdcdc"/>
<rect x="729.500" y="794.500" width="18" height="17" rx="3" fill="#999" stroke="#a8a8a8"/>
<path d="M733.500 799l4.500 4l-4.500 4M740 808h5" stroke="#3c3c3c" stroke-width="1.700" fill="none"/>
<path d="M752 801.300h7l-3.500 3.500Z" fill="#666"/>
<path d="M949.500 808h10.500l-5.250-5.500Z" fill="#1e1e1e"/>
</svg>
<!-- compass text -->
<div class="t" style="left:1326px;top:266px"><span class="w" style="font-size:17px;color:#bcbcbc;font-family:'Liberation Serif','Noto Serif CJK SC',serif">北</span></div>
<div class="t" style="left:1279px;top:313px"><span class="w" style="font-size:17px;color:#bcbcbc;font-family:'Liberation Serif','Noto Serif CJK SC',serif">西</span></div>
<div class="t" style="left:1372px;top:313px"><span class="w" style="font-size:17px;color:#bcbcbc;font-family:'Liberation Serif','Noto Serif CJK SC',serif">东</span></div>
<div class="t" style="left:1326px;top:361px"><span class="w" style="font-size:17px;color:#bcbcbc;font-family:'Liberation Serif','Noto Serif CJK SC',serif">南</span></div>
<div class="t" style="left:1321px;top:307px"><span class="w" style="font-size:27px;color:#4c4c4c;font-family:'Liberation Serif','Noto Serif CJK SC',serif">上</span></div>
<div class="t" style="left:1309px;top:398px;font-size:13.200px;line-height:15px;color:#55555a">WCS</div>
<!-- command text -->
<div class="t cm" style="left:732px;top:696px"><span class="cj">命令</span>: _scale <span class="cj">找到</span> 1 <span class="cj">个</span></div>
<div class="t cm" style="left:732px;top:720.500px"><span class="cj">指定基点</span>:</div>
<div class="t cm" style="left:732px;top:745.500px"><span class="cj">指定比例因子或</span> [<span class="cj">复制</span>(C)/<span class="cj">参</span></div>
<div class="t cm" style="left:732px;top:764.500px"><span class="cj">照</span>(R)]: 1.5</div>
<style>.cm{font-family:"Liberation Mono","Noto Sans CJK SC",monospace;font-size:14.67px;line-height:16px;color:#e4e4e4;white-space:pre}.cm .cj{font-size:16px;line-height:16px}</style>
<div class="t" style="left:769px;top:795px"><span class="w" style="font-size:16px;color:#7c7c7c;font-style:italic">键入命令</span></div>
<!-- baidu watermark -->
<div class="t" id="bai" style="left:1078.500px;top:759.500px;font-size:57px;line-height:60px;font-weight:bold;color:#b5b5b5;-webkit-text-stroke:1.300px #b5b5b5;letter-spacing:-.5px;transform-origin:0 0;transform:scaleX(.965)">Bai</div>
<svg class="ic" style="left:1165px;top:731px" width="73" height="78" viewBox="0 0 73 78">
<g fill="#b5b5b5"><ellipse cx="27" cy="12" rx="8.500" ry="11.500"/><ellipse cx="47.500" cy="13" rx="8.500" ry="11.500"/><ellipse cx="9.500" cy="33" rx="8.500" ry="11" transform="rotate(-12 9.500 33)"/><ellipse cx="63.500" cy="35" rx="8.500" ry="11" transform="rotate(12 63.500 35)"/>
<path d="M36 29C48 29 53 42 61 50C70 59 68 76 53 78C44 79 40 76.500 36 76.500C32 76.500 26 79.500 17 78C3 75 4 58 12 50.500C20 43 25 29 36 29Z"/></g>
<g fill="none" stroke="#000" stroke-width="4.600"><path d="M32 48v22.500M32 57.500h-7a5 5 0 0 0-5 5v3a5 5 0 0 0 5 5h7"/><path d="M40 57v8.500a5 5 0 0 0 5 5h7V57"/></g>
</svg>
<div class="t" style="left:1241px;top:767.500px"><span class="w" style="font-size:41px;color:#b5b5b5;font-weight:bold">经验</span></div>
<div class="t" id="jy" style="left:1082.400px;top:814.850px;font-size:28.900px;line-height:36px;color:#d4d4d4;z-index:5;transform-origin:0 0;transform:scaleX(1.088)">jingyan.b</div>
<!-- ===== LAYOUT TABS + STATUS BAR ===== -->
<div class="a" id="bottom" style="left:1px;top:820px;width:1403px;height:60px;background:#383838"></div>
<svg class="ic" style="left:0;top:820px" width="260" height="24" viewBox="0 820 260 24">
<defs><linearGradient id="lg1" x1="0" y1="0" x2="0" y2="1"><stop offset="0" stop-color="#565656"/><stop offset=".6" stop-color="#6a6a6a"/><stop offset="1" stop-color="#808080"/></linearGradient>
<linearGradient id="lg2" x1="0" y1="0" x2="0" y2="1"><stop offset="0" stop-color="#4a4a4a"/><stop offset="1" stop-color="#545454"/></linearGradient></defs>
<path d="M77 820.500C82 824 80 842.500 88 842.500H133C141 842.500 139 824 144 820.500Z" fill="url(#lg2)" stroke="#5e5e5e" stroke-width=".7"/>
<path d="M145.500 820.500C150.500 824 148.500 842.500 156.500 842.500H202.500C210.500 842.500 210.500 824 215.500 820.500Z" fill="url(#lg2)" stroke="#5e5e5e" stroke-width=".7"/>
<path d="M8 820.500C16 822 14 842.500 24 842.500H62C72 842.500 70 824 77 820.500Z" fill="url(#lg1)"/>
<path d="M227 822.500H246C245 832 242 841.500 232 841.500H217.500C219 832 220 823.500 227 822.500Z" fill="#505050" stroke="#5e5e5e" stroke-width=".7"/>
<path d="M226.500 831.500h10M231.500 826.500v10" stroke="#e0e0e0" stroke-width="2.200"/>
</svg>
<div class="t" style="left:30px;top:824px"><span class="w" style="font-size:15px;color:#fff;font-weight:bold">模型</span></div>
<div class="t" style="left:90px;top:824px"><span class="w" style="font-size:15px;color:#c2c2c2">布局</span><span class="lat" style="color:#c2c2c2">1</span></div>
<div class="t" style="left:160px;top:824px"><span class="w" style="font-size:15px;color:#c2c2c2">布局</span><span class="lat" style="color:#c2c2c2">2</span></div>
<style>.lat{font-size:15px;line-height:0;vertical-align:0}</style>
<!-- status bar -->
<div class="a" id="status" style="left:232px;top:845px;width:1172px;height:33px;background:#505050;border:1px solid #7c7c7c;border-right:none"></div>
<div class="t" id="coords" style="left:255px;top:853.700px;font-size:15px;line-height:18px;color:#f2f2f2;transform-origin:0 0;transform:scaleX(.96)">2820.0483, 1463.7254, 0.0000</div>
<div class="t" style="left:466px;top:854px"><span class="w" style="font-size:15px;color:#f2f2f2">模型</span></div>
<div class="t" id="scale" style="left:981px;top:853.700px;font-size:15px;line-height:18px;color:#f2f2f2;transform-origin:0 0;transform:scaleX(.9)">1:1 / 100%</div>
<svg class="ic" id="sbicons" style="left:232px;top:845px" width="1172" height="34" viewBox="232 845 1172 34">
<g fill="#5b8dc6"><rect x="500" y="848" width="28" height="28"/><rect x="613" y="848" width="28.500" height="28"/><rect x="772" y="848" width="29" height="28"/><rect x="803" y="848" width="28" height="28"/><rect x="886" y="848" width="28.500" height="28"/></g>
<g stroke="#767676" stroke-width="1" fill="none"><path d="M459.500 846V878M461.500 846V878M497.500 846V878M578.500 846V878M580.500 846V878M851.500 846V878M882.500 846V878M884.500 846V878M1065.500 846V878M1067.500 846V878M1117.500 846V878M1148.500 846V878M1150.500 846V878M1182.500 846V878"/></g>
<g fill="#f4f4f4"><path d="M563.900 858.500h9l-4.500 5.500Z"/><path d="M708.200 858.500h9l-4.500 5.500Z"/><path d="M756.600 858.500h9l-4.500 5.500Z"/><path d="M836.700 858.500h9l-4.500 5.500Z"/><path d="M1051.300 858.500h9l-4.500 5.500Z"/><path d="M1103 858.500h9l-4.500 5.500Z"/></g>
<!-- grid icon -->
<g stroke="#e8fbff" stroke-width="1.100" fill="none"><path d="M504 856.500H523.500M504 861.500H523.500M504 866.500H523.500M508.500 852V870.500M513.500 852V870.500M518.500 852V870.500"/></g>
<!-- snap dots -->
<g fill="#e8e8e8"><rect x="537" y="854" width="2.500" height="2.500"/><rect x="542.500" y="854" width="2.500" height="2.500"/><rect x="548" y="854" width="2.500" height="2.500"/><rect x="537" y="860" width="2.500" height="2.500"/><rect x="542.500" y="860" width="2.500" height="2.500"/><rect x="548" y="860" width="2.500" height="2.500"/><rect x="537" y="866" width="2.500" height="2.500"/><rect x="542.500" y="866" width="2.500" height="2.500"/><rect x="548" y="866" width="2.500" height="2.500"/></g>
<!-- infer constraints -->
<rect x="586" y="864.200" width="10" height="7.500" fill="#dedede"/><path d="M596 864.500V853H605V858.500H596.500" stroke="#dedede" stroke-width="1.300" fill="none"/>
<!-- dynamic input -->
<path d="M621.500 853v11M616 858.500h11" stroke="#f0fbff" stroke-width="1.300"/><rect x="623.700" y="864.200" width="13.500" height="5.200" fill="#fff"/><rect x="626" y="865.400" width="4" height="2.800" fill="#5b8dc6" opacity=".55"/>
<!-- ortho -->
<path d="M648.500 852V871.300H667.800M648.500 865.600H654.200V871.300" stroke="#e6e6e6" stroke-width="1.300" fill="none"/>
<!-- polar -->
<circle cx="686.300" cy="862" r="8" stroke="#e6e6e6" stroke-width="1.300" fill="none"/><path d="M685.500 862.800L694.800 853.500M685.500 862.800H698.400" stroke="#e6e6e6" stroke-width="1.300" fill="none"/>
<!-- isodraft -->
<path d="M729.700 852.800L743.200 869.200" stroke="#c9463c" stroke-width="1.200"/><path d="M737 852V870.600" stroke="#5dbb4f" stroke-width="1.200"/><rect x="735.500" y="859.800" width="3" height="3" fill="#505050" stroke="#e6e6e6" stroke-width="1"/>
<!-- otrack -->
<path d="M777.400 868.500H797.300M777.400 868.500L794.400 853.500" stroke="#fff" stroke-width="1.300" fill="none"/><rect x="782.300" y="860.300" width="3.500" height="3.500" fill="#fff"/>
<!-- osnap -->
<path d="M810 858V871.300H826.500V854.800H813" stroke="#f0fbff" stroke-width="1.300" fill="none"/><rect x="807" y="852.200" width="5.800" height="5.800" fill="#5b8dc6" stroke="#fff" stroke-width="1.200"/>
<!-- lineweight -->
<g fill="#e6e6e6"><rect x="857" y="854.200" width="10.800" height="2.800"/><rect x="857" y="854.200" width="20.700" height="1"/><rect x="857" y="860" width="10.800" height="3.500"/><rect x="857" y="860" width="20.700" height="1"/><rect x="857" y="865.600" width="10.800" height="4"/><rect x="857" y="865.600" width="20.700" height="1"/></g>
<!-- annotation icons -->
<path d="M898.400 851.800L903.300 863.500L907 871.800L898.400 866.800L889.800 871.800L893.500 863.500Z" fill="#fff"/><path d="M898.400 866.800v5" stroke="#5b8dc6" stroke-width="1"/><circle cx="906.300" cy="856" r="2.800" fill="none" stroke="#eaf6ff" stroke-width="1.200"/>
<path d="M929 852.500L933.700 864L937.500 871.800L929 867L920.500 871.800L924.300 864Z" fill="#dcdcdc"/><path d="M929 867v5" stroke="#505050" stroke-width="1"/><path d="M939.500 851.500l-4 5h2.300l-2.300 4.500l5.300-6h-2.300l2.300-3.500Z" fill="#dcdcdc"/>
<path d="M959.500 852.300L964.300 864L968.200 871.800L959.500 867L950.800 871.800L954.700 864Z" fill="#dcdcdc"/><path d="M959.500 867v5" stroke="#505050" stroke-width="1"/>
<!-- gear -->
<g transform="translate(1082.500 862)"><g fill="#e0e0e0"><circle r="7.500"/><rect x="-2" y="-10.500" width="4" height="21"/><rect x="-2" y="-10.500" width="4" height="21" transform="rotate(45)"/><rect x="-2" y="-10.500" width="4" height="21" transform="rotate(90)"/><rect x="-2" y="-10.500" width="4" height="21" transform="rotate(135)"/></g><circle r="3.500" fill="#505050"/></g>
<!-- plus -->
<path d="M1123 862H1142M1132.500 852.500V871.500" stroke="#f0f0f0" stroke-width="2.400"/>
<!-- customization -->
<rect x="1158.500" y="852.500" width="15" height="19" fill="none" stroke="#e0e0e0" stroke-width="1.300"/><rect x="1158" y="852" width="16" height="3" fill="#e0e0e0"/><g fill="#e0e0e0"><rect x="1161" y="858" width="2" height="2"/><rect x="1161" y="862.500" width="2" height="2"/><rect x="1161" y="867" width="2" height="2"/><rect x="1164.500" y="858.500" width="6" height="1"/><rect x="1164.500" y="863" width="6" height="1"/><rect x="1164.500" y="867.500" width="6" height="1"/></g>
<rect x="1189.500" y="853.500" width="14" height="14" fill="none" stroke="#e0e0e0" stroke-width="1.300"/>
</svg>
<!-- site watermark -->
<div class="a" id="wm" style="left:1198px;top:801px;width:206px;height:80px;z-index:10;background:radial-gradient(ellipse 62% 70% at 50% 42%,#b2e3f6 0%,#a6dbf3 35%,rgba(150,195,236,.7) 65%,rgba(120,150,215,0) 100%),linear-gradient(180deg,#86d4ea 0%,#8fb4e2 30%,#7f98d6 55%,#5272bc 80%,#34509e 100%)"></div>
<div class="t" style="left:1227px;top:811px;z-index:11"><svg width="157.00" height="31.40" style="vertical-align:-3.77px"><text x="0" y="27.63" font-size="31.4" font-weight="bold" font-family="Liberation Sans, Noto Sans CJK SC, sans-serif" fill="url(#wg)">我爱学教程</text></svg></div>
<svg width="0" height="0" style="position:absolute"><defs><linearGradient id="wg" x1="0" y1="0" x2="1" y2="0"><stop offset="0" stop-color="#18a6a6"/><stop offset=".3" stop-color="#2bb05e"/><stop offset=".6" stop-color="#3ab14a"/><stop offset=".8" stop-color="#2aa878"/><stop offset="1" stop-color="#159fbe"/></linearGradient></defs></svg>
<div class="t" id="wmurl" style="left:1233px;top:851.500px;z-index:11;font-size:17px;line-height:20px;font-weight:bold;color:#37ad63;transform-origin:0 0;transform:scaleX(1.148)">www.52xjc.com</div>
<div class="a" style="left:0;top:880px;width:1405px;height:1px;background:#fff;z-index:9"></div>
</body>
</html>
